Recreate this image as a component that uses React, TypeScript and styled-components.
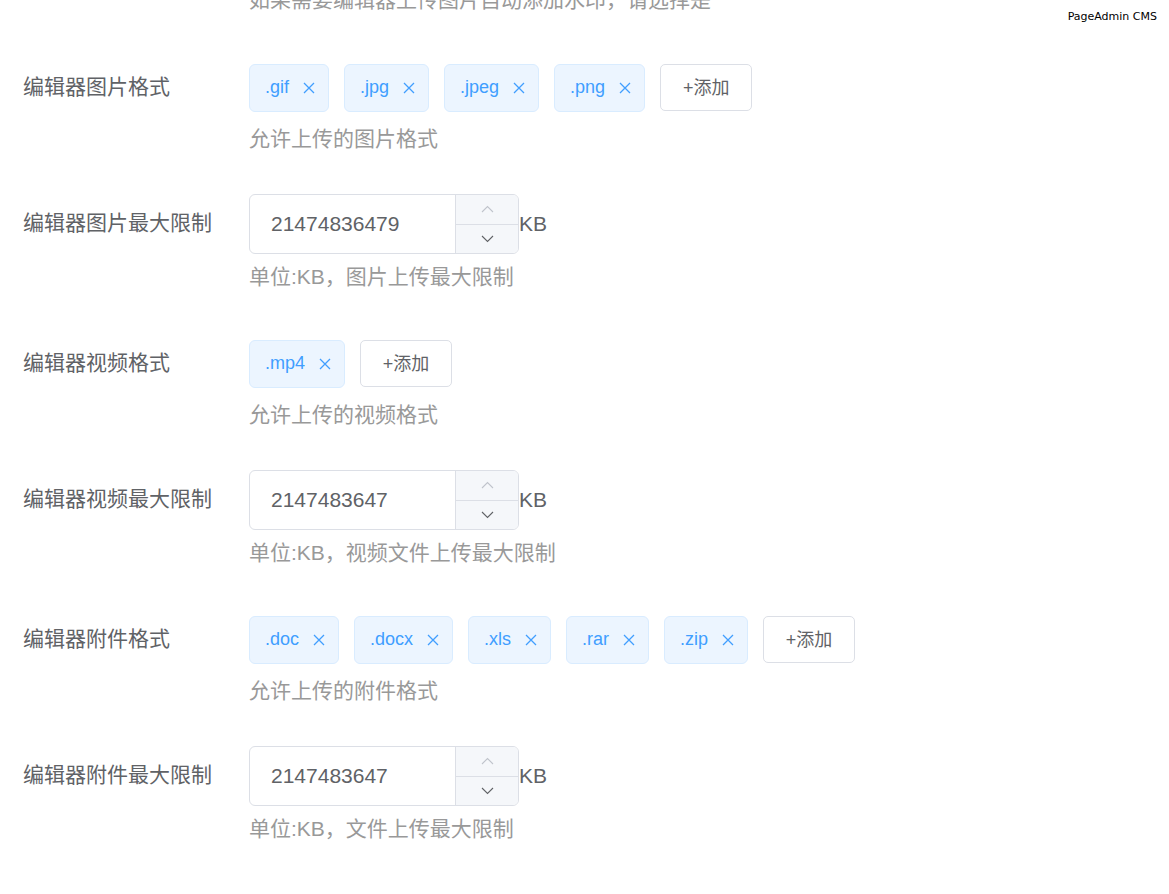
import React from 'react';
import styled, {createGlobalStyle} from 'styled-components';

type Kind = 'tags' | 'number';

type Row =
  | {kind: 'tags'; label: string; tags: string[]; help: string}
  | {kind: 'number'; label: string; value: string; help: string};

const rows: Row[] = [
  {kind: 'tags', label: '编辑器图片格式', tags: ['.gif', '.jpg', '.jpeg', '.png'], help: '允许上传的图片格式'},
  {kind: 'number', label: '编辑器图片最大限制', value: '21474836479', help: '单位:KB，图片上传最大限制'},
  {kind: 'tags', label: '编辑器视频格式', tags: ['.mp4'], help: '允许上传的视频格式'},
  {kind: 'number', label: '编辑器视频最大限制', value: '2147483647', help: '单位:KB，视频文件上传最大限制'},
  {kind: 'tags', label: '编辑器附件格式', tags: ['.doc', '.docx', '.xls', '.rar', '.zip'], help: '允许上传的附件格式'},
  {kind: 'number', label: '编辑器附件最大限制', value: '2147483647', help: '单位:KB，文件上传最大限制'},
];

const GlobalStyle = createGlobalStyle`
  html, body {
    margin: 0;
    padding: 0;
    background: #fff;
  }

  body {
    font-family: "Liberation Sans", "Noto Sans CJK SC", sans-serif;
    overflow: hidden;
  }
`;

const Page = styled.div`
  position: relative;
  height: 894px;
  overflow: hidden;
`;

const Watermark = styled.div`
  position: absolute;
  top: 10px;
  right: 12px;
  font-family: "DejaVu Sans", sans-serif;
  font-size: 11px;
  line-height: 14px;
  color: #000;
`;

const Form = styled.div`
  margin-top: -15px;
  padding-left: 23px;
`;

const Help = styled.div<{$kind?: Kind}>`
  margin-top: ${({$kind}) => ($kind === 'tags' ? 6 : $kind === 'number' ? 8 : 0)}px;
  font-size: 21px;
  line-height: 30px;
  color: #999;
  white-space: nowrap;
`;

const LeadHelp = styled(Help)`
  margin-left: 226px;
  margin-bottom: 43px;
`;

const FormItem = styled.div<{$kind: Kind}>`
  display: grid;
  grid-template-columns: 226px 1fr;
  margin-bottom: ${({$kind}) => ($kind === 'tags' ? 40 : 42)}px;
`;

const Label = styled.label`
  height: 60px;
  line-height: 58px;
  font-size: 21px;
  color: #606266;
  white-space: nowrap;
`;

const Control = styled.div`
  display: flex;
  align-items: center;
  min-height: 60px;
`;

const Tag = styled.span`
  display: inline-flex;
  align-items: center;
  box-sizing: border-box;
  height: 48px;
  padding: 0 7px 2px 15px;
  margin-right: 15px;
  background: #ecf5ff;
  border: 1px solid #d9ecff;
  border-radius: 6px;
  color: #409eff;
  font-size: 18px;
  white-space: nowrap;
`;

const TagClose = styled.span`
  display: inline-flex;
  align-items: center;
  justify-content: center;
  width: 24px;
  height: 24px;
  margin-left: 8px;
  margin-top: 2px;
  border-radius: 50%;
  cursor: pointer;
`;

const AddButton = styled.button`
  box-sizing: border-box;
  width: 92px;
  height: 47px;
  margin-top: -1px;
  padding: 0 0 4px;
  background: #fff;
  border: 1px solid #dcdfe6;
  border-radius: 5px;
  color: #606266;
  font-family: inherit;
  font-size: 18px;
  cursor: pointer;
`;

const NumberBox = styled.div`
  display: flex;
  box-sizing: border-box;
  width: 270px;
  height: 60px;
  border: 1px solid #dcdfe6;
  border-radius: 6px;
  overflow: hidden;
  background: #fff;
`;

const NumberValue = styled.input`
  flex: 1;
  min-width: 0;
  border: 0;
  outline: none;
  padding: 0 0 0 21px;
  font-family: inherit;
  font-size: 21px;
  color: #606266;
  background: transparent;
`;

const Steps = styled.div`
  display: flex;
  flex-direction: column;
  width: 62px;
  border-left: 1px solid #dcdfe6;
  background: #f5f7fa;
`;

const Step = styled.span<{$disabled?: boolean}>`
  flex: 1;
  display: flex;
  align-items: center;
  justify-content: center;
  color: ${({$disabled}) => ($disabled ? '#c0c4cc' : '#606266')};

  & + & {
    border-top: 1px solid #dcdfe6;
  }
`;

const Unit = styled.span`
  font-size: 21px;
  color: #606266;
`;

const CloseIcon = () => (
  <svg width="12" height="12" viewBox="0 0 12 12">
    <path d="M1 1 L11 11 M11 1 L1 11" stroke="#409eff" strokeWidth="1.3" fill="none" />
  </svg>
);

const Chevron = ({up}: {up?: boolean}) => (
  <svg width="13" height="8" viewBox="0 0 13 8">
    <path
      d={up ? 'M1 7 L6.5 1.5 L12 7' : 'M1 1 L6.5 6.5 L12 1'}
      stroke="currentColor"
      strokeWidth="1.1"
      fill="none"
    />
  </svg>
);

const TagField = ({tags}: {tags: string[]}) => (
  <Control>
    {tags.map(tag => (
      <Tag key={tag}>
        {tag}
        <TagClose>
          <CloseIcon />
        </TagClose>
      </Tag>
    ))}
    <AddButton>+添加</AddButton>
  </Control>
);

const NumberField = ({value}: {value: string}) => (
  <Control>
    <NumberBox>
      <NumberValue defaultValue={value} />
      <Steps>
        <Step $disabled>
          <Chevron up />
        </Step>
        <Step>
          <Chevron />
        </Step>
      </Steps>
    </NumberBox>
    <Unit>KB</Unit>
  </Control>
);

export default function App() {
  return (
    <Page>
      <GlobalStyle />
      <Watermark>PageAdmin CMS</Watermark>
      <Form>
        <LeadHelp>如果需要编辑器上传图片自动添加水印，请选择是</LeadHelp>
        {rows.map(row => (
          <FormItem key={row.label} $kind={row.kind}>
            <Label>{row.label}</Label>
            <div>
              {row.kind === 'tags' ? <TagField tags={row.tags} /> : <NumberField value={row.value} />}
              <Help $kind={row.kind}>{row.help}</Help>
            </div>
          </FormItem>
        ))}
      </Form>
    </Page>
  );
}
